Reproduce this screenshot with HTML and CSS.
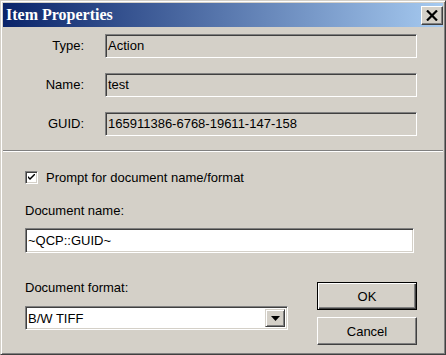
FILE: index.html
```html
<!DOCTYPE html>
<html lang="en">
<head>
<meta charset="utf-8">
<title>Item Properties</title>
<link rel="stylesheet" href="styles.css">
</head>
<body>
<div class="window">
  <div class="titlebar">
    <span class="title">Item Properties</span>
    <div class="close">
      <svg width="12" height="11" viewBox="0 0 12 11"><path d="M1 0.5 L11 10.5 M11 0.5 L1 10.5" stroke="#000" stroke-width="2.2"/></svg>
    </div>
  </div>

  <!-- read-only item info -->
  <div class="props">
    <div class="plabel">Type:</div>
    <div class="field">Action</div>
    <div class="plabel">Name:</div>
    <div class="field">test</div>
    <div class="plabel">GUID:</div>
    <div class="field">165911386-6768-19611-147-158</div>
  </div>

  <div class="sep"></div>

  <div class="options">
    <div class="check">
      <span class="box">
        <svg width="7" height="7" viewBox="0 0 7 7"><path d="M0 2 L0 4 L2 6 L7 1 L7 -1 L2 4 Z" fill="#000"/></svg>
      </span>
      <span>Prompt for document name/format</span>
    </div>
    <div class="lbl">Document name:</div>
    <div class="input">~QCP::GUID~</div>

    <div class="bottom">
      <div class="fmt">
        <div class="lbl">Document format:</div>
        <div class="select">
          <span class="value">B/W TIFF</span>
          <span class="arrow">
            <svg width="9" height="5" viewBox="0 0 9 5"><path d="M0 0 H9 L4.5 5 Z" fill="#000"/></svg>
          </span>
        </div>
      </div>
      <div class="buttons">
        <div class="btn default">OK</div>
        <div class="btn">Cancel</div>
      </div>
    </div>
  </div>
</div>
</body>
</html>
```

FILE: styles.css
```css
/* classic dialog look */
body {
  margin: 0;
  background-color: #d4d0c8;
  font-family: "Liberation Sans", Arial, sans-serif;
  font-size: 13px;
  color: #000;
}

.window {
  width: 446px;
  height: 355px;
  box-sizing: border-box;
  border: 1px solid;
  border-color: #d4d0c8 #404040 #404040 #d4d0c8;
  box-shadow: inset 1px 1px 0 #fff, inset -1px -1px 0 #808080;
  padding: 2px;
  background-color: #d4d0c8;
}

.titlebar {
  height: 24px;
  display: flex;
  align-items: center;
  justify-content: space-between;
  background: linear-gradient(to right, #0a246a, #a6caf0);
  padding-left: 3px;
}

.title {
  color: #fff;
  font-family: "Liberation Serif", "Times New Roman", serif;
  font-weight: bold;
  font-size: 16px;
}

.close {
  width: 22px;
  height: 19px;
  box-sizing: border-box;
  background: #d4d0c8;
  border: 1px solid;
  border-color: #fff #404040 #404040 #fff;
  box-shadow: inset -1px -1px 0 #808080;
  display: flex;
  align-items: center;
  justify-content: center;
}

.props {
  display: grid;
  grid-template-columns: 81px 312px;
  column-gap: 21px;
  row-gap: 15px;
  padding-top: 7px;
}

.plabel {
  text-align: right;
  line-height: 24px;
}

.field {
  height: 24px;
  box-sizing: border-box;
  border: 1px solid;
  border-color: #808080 #fff #fff #808080;
  box-shadow: inset 1px 1px 0 #404040;
  padding-left: 2px;
  line-height: 22px;
}

.sep {
  margin-top: 14px;
  border-top: 1px solid #808080;
  border-bottom: 1px solid #fff;
}

.options {
  padding-left: 22px;
}

.check {
  display: flex;
  align-items: center;
  margin-top: 19px;
  height: 13px;
}

.box {
  width: 13px;
  height: 13px;
  box-sizing: border-box;
  background: #fff;
  border: 1px solid;
  border-color: #808080 #fff #fff #808080;
  box-shadow: inset 1px 1px 0 #404040, inset -1px -1px 0 #d4d0c8;
  display: flex;
  align-items: center;
  justify-content: center;
  margin-right: 8px;
}

.lbl {
  line-height: 16px;
}

.check + .lbl {
  margin-top: 19px;
}

.input {
  margin-top: 9px;
  width: 389px;
  height: 25px;
  box-sizing: border-box;
  background: #fff;
  border: 1px solid;
  border-color: #808080 #fff #fff #808080;
  box-shadow: inset 1px 1px 0 #404040, inset -1px -1px 0 #d4d0c8;
  padding-left: 2px;
  line-height: 23px;
}

.bottom {
  display: flex;
  margin-top: 27px;
}

.fmt {
  width: 263px;
}

.fmt .lbl {
  margin-bottom: 10px;
}

.select {
  height: 24px;
  box-sizing: border-box;
  background: #fff;
  border: 1px solid;
  border-color: #808080 #fff #fff #808080;
  box-shadow: inset 1px 1px 0 #404040, inset -1px -1px 0 #d4d0c8;
  padding: 2px;
  display: flex;
  align-items: center;
  justify-content: space-between;
}

.arrow {
  width: 20px;
  height: 18px;
  box-sizing: border-box;
  background: #d4d0c8;
  border: 1px solid;
  border-color: #d4d0c8 #404040 #404040 #d4d0c8;
  box-shadow: inset 1px 1px 0 #fff, inset -1px -1px 0 #808080;
  display: flex;
  align-items: center;
  justify-content: center;
}

.buttons {
  margin-left: 29px;
  margin-top: 2px;
  display: flex;
  flex-direction: column;
  gap: 7px;
}

.btn {
  width: 100px;
  height: 28px;
  box-sizing: border-box;
  border: 1px solid;
  border-color: #fff #404040 #404040 #fff;
  box-shadow: inset -1px -1px 0 #808080;
  display: flex;
  align-items: center;
  justify-content: center;
}

.btn.default {
  border: 1px solid #000;
  box-shadow: inset 1px 1px 0 #fff, inset -1px -1px 0 #404040, inset -2px -2px 0 #808080;
}
```
